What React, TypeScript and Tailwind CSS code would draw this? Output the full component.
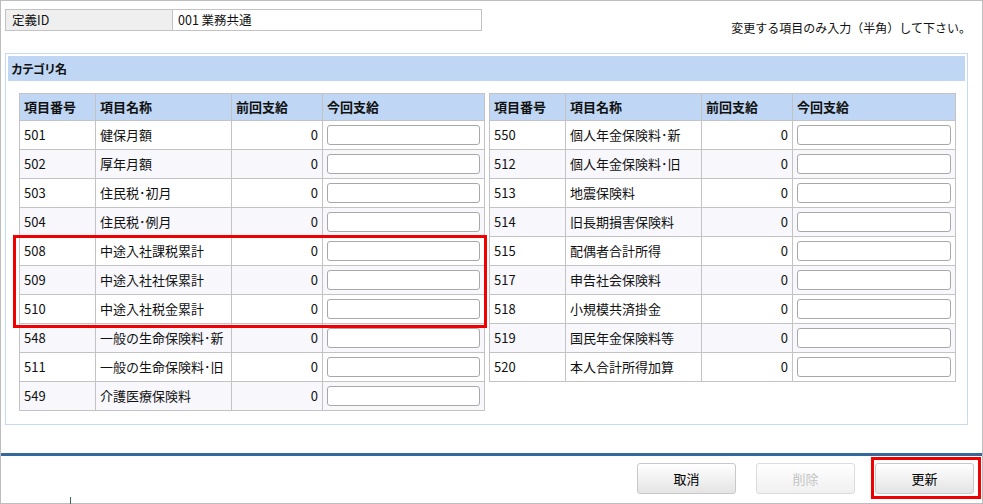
import React from 'react'

type Item = { no: string; name: string; prev: number }

const leftItems: Item[] = [
  { no: '501', name: '健保月額', prev: 0 },
  { no: '502', name: '厚年月額', prev: 0 },
  { no: '503', name: '住民税･初月', prev: 0 },
  { no: '504', name: '住民税･例月', prev: 0 },
  { no: '508', name: '中途入社課税累計', prev: 0 },
  { no: '509', name: '中途入社社保累計', prev: 0 },
  { no: '510', name: '中途入社税金累計', prev: 0 },
  { no: '548', name: '一般の生命保険料･新', prev: 0 },
  { no: '511', name: '一般の生命保険料･旧', prev: 0 },
  { no: '549', name: '介護医療保険料', prev: 0 },
]

const rightItems: Item[] = [
  { no: '550', name: '個人年金保険料･新', prev: 0 },
  { no: '512', name: '個人年金保険料･旧', prev: 0 },
  { no: '513', name: '地震保険料', prev: 0 },
  { no: '514', name: '旧長期損害保険料', prev: 0 },
  { no: '515', name: '配偶者合計所得', prev: 0 },
  { no: '517', name: '申告社会保険料', prev: 0 },
  { no: '518', name: '小規模共済掛金', prev: 0 },
  { no: '519', name: '国民年金保険料等', prev: 0 },
  { no: '520', name: '本人合計所得加算', prev: 0 },
]

const cell = 'border-l border-t border-[#c3c3c3] flex items-center'

const ItemTable: React.FC<{ items: Item[]; lastW: string }> = ({ items, lastW }) => {
  return (
    <div className="border-r border-b border-[#c3c3c3] self-start">
      <div className="flex h-[27px] bg-[#bfd7f4] font-bold">
        <div className={`${cell} w-[76px] pl-[4px]`}>項目番号</div>
        <div className={`${cell} w-[136px] pl-[4px]`}>項目名称</div>
        <div className={`${cell} w-[91px] pl-[4px]`}>前回支給</div>
        <div className={`${cell} ${lastW} pl-[4px]`}>今回支給</div>
      </div>
      {items.map((it, i) => (
        <div key={it.no} className={`flex h-[29px] ${i % 2 ? 'bg-[#f7f7fc]' : 'bg-white'}`}>
          <div className={`${cell} w-[76px] pl-[4px]`}>{it.no}</div>
          <div className={`${cell} w-[136px] pl-[4px]`}>{it.name}</div>
          <div className={`${cell} w-[91px] justify-end pr-[4px]`}>{it.prev}</div>
          <div className={`${cell} ${lastW} px-[4px]`}>
            <input
              type="text"
              className="h-[20px] w-full rounded-[3px] border border-[#a8a8a8] bg-white px-1 outline-none"
            />
          </div>
        </div>
      ))}
    </div>
  )
}

const Btn: React.FC<{ label: string; disabled?: boolean }> = ({ label, disabled }) => (
  <button
    type="button"
    disabled={disabled}
    className={`h-[31px] w-[99px] rounded-[3px] border text-[13px] ${
      disabled
        ? 'border-[#dcdcdc] bg-linear-to-b from-white to-[#f0f0f0] text-[#c4c4c4]'
        : 'border-[#c8c8c8] bg-linear-to-b from-white to-[#e4e4e4] text-black'
    }`}
  >
    {label}
  </button>
)

export default function App() {
  return (
    <div className="relative flex h-[504px] w-[983px] flex-col border border-[#bdbdbd] bg-white font-['Noto_Sans_CJK_JP',sans-serif] text-[13px] leading-[18px] text-[#111]">
      {/* definition row + hint */}
      <div className="mt-[8px] flex h-[22px] items-start justify-between pl-[4px] pr-[11px]">
        <div className="flex h-[22px] w-[477px] border border-[#c3c3c3] text-[12.5px]">
          <div className="flex w-[167px] items-center border-r border-[#c3c3c3] bg-[#efefef] pl-[6px]">定義ID</div>
          <div className="flex flex-1 items-center pl-[5px]">001 業務共通</div>
        </div>
        <div className="mt-[10px] text-[12px]">変更する項目のみ入力（半角）して下さい。</div>
      </div>

      {/* category panel */}
      <div className="ml-[4px] mt-[22px] h-[372px] w-[963px] border border-[#c5dbf4] p-[2px]">
        <div className="flex h-[25px] items-center bg-[#bfd7f4] pl-[3px] text-[12px] font-bold tracking-[-1px]">
          カテゴリ名
        </div>
        <div className="mt-[12px] flex gap-[4px] pl-[11px]">
          <ItemTable items={leftItems} lastW="w-[162px]" />
          <ItemTable items={rightItems} lastW="w-[163px]" />
        </div>
      </div>

      {/* footer */}
      <div className="mt-[28px] h-[3px] bg-[#36699b]" />
      <div className="mt-[7px] flex justify-end gap-[20px] pr-[8px]">
        <Btn label="取消" />
        <Btn label="削除" disabled />
        <Btn label="更新" />
      </div>

      {/* highlight frames */}
      <div className="pointer-events-none absolute left-[12px] top-[234px] h-[93px] w-[474px] border-[3px] border-[#f00000]" />
      <div className="pointer-events-none absolute left-[870px] top-[456px] h-[42px] w-[110px] border-[3px] border-[#f00000]" />
      <div className="absolute left-[69px] top-[496px] h-[7px] w-px bg-[#3d6b4f]" />
    </div>
  )
}
